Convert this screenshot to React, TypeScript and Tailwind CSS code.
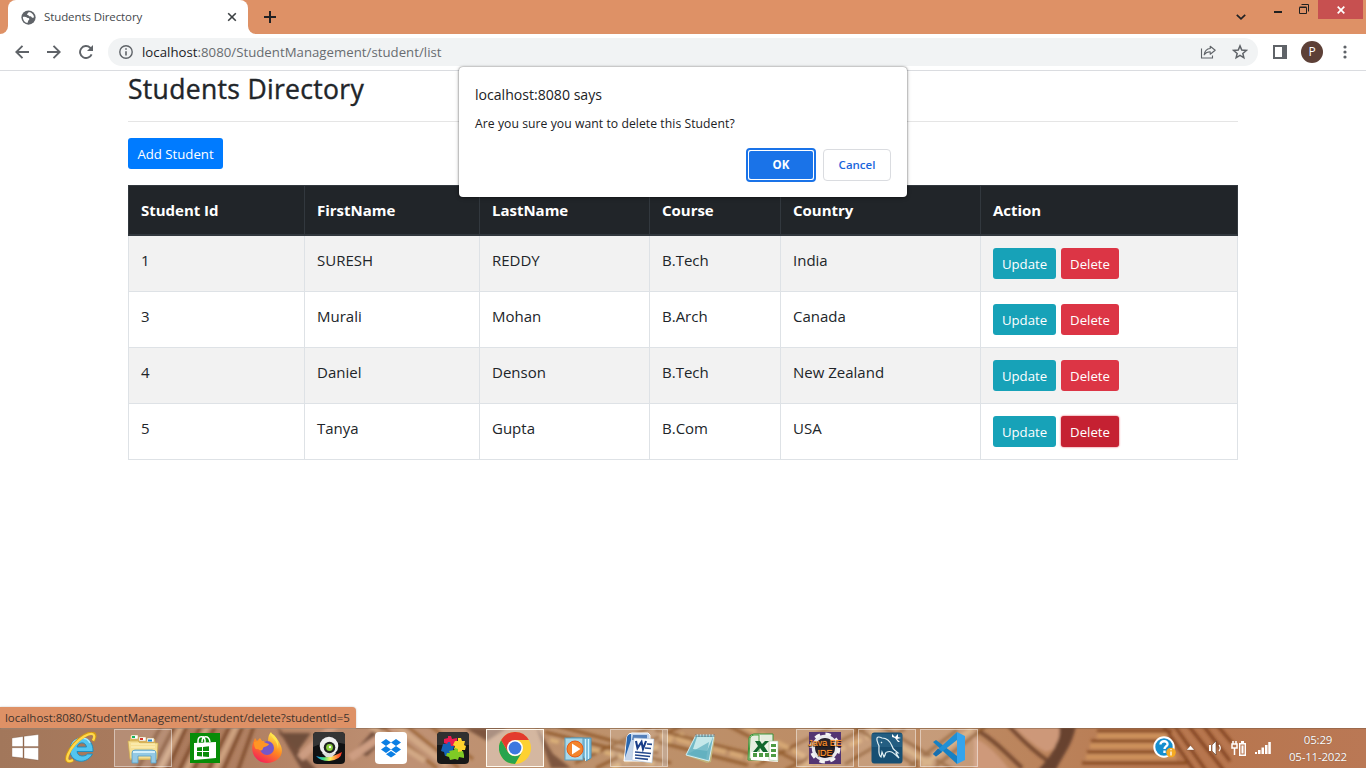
import React from "react";

type IconProps = { children: React.ReactNode; box?: string; cls?: string };

function Svg({ children, box = "0 0 32 32", cls = "w-8 h-8" }: IconProps) {
  return (
    <svg viewBox={box} className={`${cls} shrink-0 block`} fill="none">
      {children}
    </svg>
  );
}

const students = [
  { id: "1", first: "SURESH", last: "REDDY", course: "B.Tech", country: "India" },
  { id: "3", first: "Murali", last: "Mohan", course: "B.Arch", country: "Canada" },
  { id: "4", first: "Daniel", last: "Denson", course: "B.Tech", country: "New Zealand" },
  { id: "5", first: "Tanya", last: "Gupta", course: "B.Com", country: "USA" },
];

const columns = ["Student Id", "FirstName", "LastName", "Course", "Country", "Action"];

function TabStrip() {
  return (
    <header className="flex h-[34px] bg-[#de9166]">
      <div className="flex w-2 items-end bg-white">
        <div className="h-full w-2 rounded-br-lg bg-[#de9166]" />
      </div>
      <div className="bg-[#de9166]">
        <div className="flex h-[34px] w-60 items-center rounded-t-lg bg-white pl-[13px] pr-[10px]">
          <Svg box="0 0 16 16" cls="w-[15px] h-[15px]">
            <circle cx="8" cy="8" r="7.6" fill="#5f6368" />
            <path d="M8.2 2c-.2 1.400-1.600 1.200-1.800 2.500-.1 1 1.500.8 2 1.700.5 1 2.500.4 3 1.400.4 1 1.600.6 2.500.5C14 5 11.400 2.300 8.200 2zM2 7.400c1.500-.3 3.400-.3 4.300.6.8.8 2.300.3 2.600 1.500.2 1-1.200 1.100-1.300 2.200 0 .8-.7 1.200-.6 2.200C4.200 13.500 2 10.900 2 7.400z" fill="#fff" />
          </Svg>
          <span className="ml-2 whitespace-nowrap text-[11.5px] tracking-[-0.1px] text-[#45494d]">Students Directory</span>
          <Svg box="0 0 10 10" cls="ml-auto w-[10px] h-[10px] mr-[1px]">
            <path d="M1.200 1.200l7.600 7.600M8.800 1.200l-7.600 7.600" stroke="#3c4043" strokeWidth="1.600" />
          </Svg>
        </div>
      </div>
      <div className="w-2 bg-white">
        <div className="h-full w-2 rounded-bl-lg bg-[#de9166]" />
      </div>
      <Svg box="0 0 12 12" cls="w-3 h-3 mt-[11px] ml-2">
        <path d="M6 0v12M0 6h12" stroke="#202124" strokeWidth="2" />
      </Svg>
      <div className="ml-auto flex">
        <Svg box="0 0 10 6" cls="w-[10px] h-[6px] mt-[14px] mr-[28px]">
          <path d="M.8 .8L5 4.800 9.200.8" stroke="#202124" strokeWidth="1.700" />
        </Svg>
        <div className="mr-[17px] mt-[11px] h-[2px] w-2 bg-[#202020]" />
        <Svg box="0 0 10 10" cls="w-[10px] h-[10px] mt-[4px] mr-[9px]">
          <path d="M.5 3.500h7v6h-7zM.5 3h7M2.500 .5h7v7" stroke="#202020" />
        </Svg>
        <div className="mr-[3px] flex h-[19px] w-[45px] items-center justify-center bg-[#c75050]">
          <Svg box="0 0 8 8" cls="w-2 h-2">
            <path d="M.7 .7l6.600 6.600M7.300 .7L.7 7.300" stroke="#fff" strokeWidth="1.700" />
          </Svg>
        </div>
      </div>
    </header>
  );
}

function Toolbar() {
  return (
    <div className="flex h-[37px] items-center border-b border-[#dadce0] bg-white pl-[15px]">
      <Svg box="0 0 14 14" cls="w-[14px] h-[14px]">
        <path d="M14 7H1.500M7.500 .8L1.300 7l6.200 6.200" stroke="#5f6368" strokeWidth="1.900" />
      </Svg>
      <Svg box="0 0 14 14" cls="w-[14px] h-[14px] ml-[18px]">
        <path d="M0 7h12.500M6.500 .8L12.700 7l-6.200 6.200" stroke="#5f6368" strokeWidth="1.900" />
      </Svg>
      <Svg box="0 0 14 14" cls="w-[14px] h-[14px] ml-[18px]">
        <path d="M12.600 9.300A6 6 0 1 1 11.200 2.700l1.500 1.500" stroke="#5f6368" strokeWidth="1.900" />
        <path d="M14 0v6H8z" fill="#5f6368" />
      </Svg>
      <div className="ml-[15px] flex h-7 w-[1150px] items-center rounded-full bg-[#f1f3f4] pl-[11px] pr-[10px]">
        <Svg box="0 0 14 14" cls="w-[14px] h-[14px]">
          <circle cx="7" cy="7" r="6.200" stroke="#5f6368" strokeWidth="1.400" />
          <path d="M7 6.200v4.300M7 3.300v1.500" stroke="#5f6368" strokeWidth="1.600" />
        </Svg>
        <span className="ml-[9px] whitespace-nowrap pt-[2px] text-[13.2px] tracking-[0.03px] text-[#686c70]">
          <span className="text-[#202124]">localhost</span>:8080/StudentManagement/student/list
        </span>
        <Svg box="0 0 16 16" cls="w-4 h-4 ml-auto">
          <path d="M1.500 4.500v9.500h11v-2.500" stroke="#5f6368" strokeWidth="1.100" />
          <path d="M10.200 2.200l5 4-5 4V7.800c-3 0-4.600 1-6 3C4.600 7.400 6.200 4.800 10.200 4.500z" stroke="#5f6368" strokeWidth="1.100" strokeLinejoin="round" />
        </Svg>
        <Svg box="0 0 16 16" cls="w-4 h-4 ml-4">
          <path d="M8 1.900l1.750 4.150 4.500.4-3.400 2.950 1 4.400L8 11.450 4.150 13.800l1-4.400-3.400-2.950 4.500-.4z" stroke="#5f6368" strokeWidth="1.500" />
        </Svg>
      </div>
      <Svg box="0 0 14 14" cls="w-[14px] h-[14px] ml-[15px]">
        <path d="M1 1h12v12H1z" stroke="#5f6368" strokeWidth="2" />
        <path d="M9 1h4v12H9z" fill="#5f6368" />
      </Svg>
      <div className="ml-[14px] flex h-[22px] w-[22px] items-center justify-center rounded-full bg-[#5d4037] text-[12px] leading-none text-white">P</div>
      <Svg box="0 0 4 14" cls="w-1 h-[14px] ml-[20px]">
        <g fill="#5f6368"><circle cx="2" cy="2" r="1.600" /><circle cx="2" cy="7" r="1.600" /><circle cx="2" cy="12" r="1.600" /></g>
      </Svg>
    </div>
  );
}

const grid = "grid grid-cols-[176px_175px_170px_131px_200px_258px] ";
const btn = "flex h-[31px] items-center justify-center rounded-[3px] text-[13.200px] text-white pt-[2px] ";

function StudentTable() {
  return (
    <div className="mt-4 w-[1110px] text-[15px] text-[#212529]" role="table">
      <div className={grid + "h-[51px] border-y border-b-2 border-r border-[#32383e] bg-[#212529] font-bold text-white"}>
        {columns.map((c) => (
          <div key={c} className="border-l border-[#32383e] pl-3 pt-[12px] text-[15px] leading-6 tracking-[-0.02px]">{c}</div>
        ))}
      </div>
      {students.map((s, i) => (
        <div key={s.id} className={grid + "h-14 border-b border-r border-[#dee2e6] " + (i % 2 === 0 ? "bg-[#f2f2f2]" : "bg-white")}>
          {[s.id, s.first, s.last, s.course, s.country].map((v, j) => (
            <div key={j} className="border-l border-[#dee2e6] pl-3 pt-[12px] leading-6">{v}</div>
          ))}
          <div className="flex gap-[5px] border-l border-[#dee2e6] pl-3 pt-3">
            <button className={btn + "w-[63px] bg-[#17a2b8]"}>Update</button>
            <button className={btn + "w-[58px] " + (s.id === "5" ? "bg-[#c52132] shadow-[0_0_2px_#dc3545]" : "bg-[#dc3545]")}>Delete</button>
          </div>
        </div>
      ))}
    </div>
  );
}

function ConfirmDialog() {
  return (
    <div role="dialog" className="absolute left-[459px] top-[67px] flex h-[130px] w-[448px] flex-col rounded-[4px] bg-white px-4 pt-[17px] shadow-[0_0_2px_rgba(0,0,0,0.6),0_1px_4px_rgba(0,0,0,0.25)]">
      <h2 className="text-[14.100px] leading-[22px] text-[#202124]">localhost:8080 says</h2>
      <p className="mt-[9px] text-[12.200px] leading-[18px] tracking-[0.05px] text-[#202124]">Are you sure you want to delete this Student?</p>
      <div className="mt-4 flex justify-end gap-2 text-[11.500px] font-semibold">
        <button className="-mt-px -mr-px h-[34px] w-[70px] rounded-[4px] border-2 border-[#1a73e8] bg-white p-px">
          <span className="flex h-full items-center justify-center rounded-[2px] bg-[#1a73e8] font-bold text-white">OK</span>
        </button>
        <button className="h-8 w-[68px] rounded-[4px] border border-[#dadce0] text-[#1a66dc]">Cancel</button>
      </div>
    </div>
  );
}

function Wallpaper() {
  return (
    <svg className="absolute inset-0 h-10 w-full" viewBox="0 0 1366 40" preserveAspectRatio="none">
      <defs>
        <filter id="soft" x="-5%" y="-50%" width="110%" height="200%"><feGaussianBlur stdDeviation="1.500" /></filter>
        <linearGradient id="sand" x1="0" x2="1">
          <stop offset="0" stopColor="#a2775b" /><stop offset=".15" stopColor="#ad7c5e" /><stop offset=".3" stopColor="#bf9174" />
          <stop offset=".45" stopColor="#bd916b" /><stop offset=".7" stopColor="#bd8a62" /><stop offset=".88" stopColor="#b7764e" /><stop offset="1" stopColor="#ba7855" />
        </linearGradient>
      </defs>
      <path d="M0 0h1366v40H0z" fill="url(#sand)" />
      <g filter="url(#soft)" fill="none" opacity=".82">
        <path d="M135 45l28-50M150 45l26-50M166 45l22-50M178 45l24-50M192 45l25-50M207 45l24-50M222 45l22-50M237 45l18-50" stroke="#794625" strokeWidth="3.500" />
        <path d="M158 45l25-50M185 45l24-50M214 45l24-50" stroke="#d5ab87" strokeWidth="5" />
        <path d="M278 5l33 0-13 18z" fill="#614232" />
        <path d="M275-4l30 34 14 14h-16zM354 24l24-27 18 3-29 28z" fill="#654331" />
        <path d="M300 30L337-5M350 30l45-31" stroke="#d2a287" strokeWidth="8" />
        <path d="M380-3l57 43M407-2l52 42M428-4l45 35" stroke="#98612d" strokeWidth="3" />
        <path d="M370-2l55 35M395-3l52 40" stroke="#d6ad89" strokeWidth="6" />
        <path d="M465 0h42l-20 13zM535-4l18 30 18 14h-20z" fill="#6f4a35" />
        <path d="M545 4l126 31M558-2l100 27M575 35l80-38M596 40l85-42" stroke="#8b5323" strokeWidth="3" />
        <path d="M550 12l110 25M612 40l74-35" stroke="#e2b87b" strokeWidth="4" strokeDasharray="9 5" />
        <path d="M655 2l100 25M658 14l90 23M725-4l83 43M756 37l75-38M785 42l80-42" stroke="#8d5627" strokeWidth="3" />
        <path d="M660 7l100 26M744-2l76 38M800 40l74-34" stroke="#dcae78" strokeWidth="5" strokeDasharray="14 4" />
        <path d="M850-4l68 43M878-4l77 47M845 36l60-35M910 38l47-36M936 38l50-40" stroke="#865124" strokeWidth="3" />
        <path d="M870 0l62 37M922 38l50-37" stroke="#d7ad7c" strokeWidth="5" />
        <path d="M980 4c14 8 24 19 42 36M1008-3c10 10 22 24 40 36" stroke="#693d27" strokeWidth="4" />
        <path d="M974 10c12 4 25 18 36 32h-36z" fill="#d29d80" />
        <path d="M1012-3h48c4 10-1 24-14 27-10-4-23-17-34-27z" fill="#d29d80" />
        <path d="M1059-3h17c-3 20-14 31-20 45h-18c8-9 15-17 18-26 4-6 4-13 3-19z" fill="#573526" />
        <path d="M1097 3h75M1091 13h80M1087 24h86M1082 35h105" stroke="#7d3f19" strokeWidth="3" />
        <path d="M1097 8h70M1090 18h82M1086 29h90" stroke="#d3975d" strokeWidth="5" />
        <path d="M1163-3l32 47M1174-3l33 47M1188-3l37 47M1203-3l27 36M1217-3l15 18" stroke="#763817" strokeWidth="3" />
      </g>
      <path d="M0 .5h1366" stroke="#715442" strokeOpacity=".4" />
    </svg>
  );
}

const FolderIcon = (
  <Svg>
    <path d="M3 9V4h8l2 3h15l2 21H3z" fill="#dfb95f" />
    <path d="M4 3h7v4H4zM12 5h7v4h-7zM20 6h7v4h-7z" fill="#fff" stroke="#b99859" strokeWidth=".5" />
    <path d="M5 4h3v2H5z" fill="#14b45b" /><path d="M13 6h3v2h-3z" fill="#d43a2d" /><path d="M21 7.500h4v2h-4z" fill="#1889d5" />
    <path d="M1 9h10l2 2h18l-1 16H3z" fill="#f6df93" stroke="#cda94b" strokeWidth=".7" />
    <path d="M4 12h24M4 15h24" stroke="#fff3c0" />
    <path d="M5 31V21q0-3 3-3h17q4 0 4 3v10h-5v-7H11v7z" fill="#93c9e4" stroke="#559fc5" strokeWidth=".8" />
    <path d="M6 20h22" stroke="#d4f0fa" strokeWidth="2" />
  </Svg>
);

const IeIcon = (
  <Svg>
    <path d="M28 19.500H12c.5 5.500 8 5.500 10.500 2.500h5C20 35 3 29 5 16 7 2 29 2 28 19.500zM12 15h9.500c-1-6-8.500-5-9.500 0z" fill="#53c5ef" stroke="#168cc2" strokeWidth=".9" />
    <path d="M7 13c3-8 15-9 18-2" stroke="#a8eaff" strokeWidth="1.500" />
    <path d="M8 28C-5 35 4 13 19 4c10-6 13-2 9 5" stroke="#d59a15" strokeWidth="3.400" />
    <path d="M8 28C-4 34 4 14 19 4.500c9-5 12-2 9 4" stroke="#ffd94b" strokeWidth="2.300" />
  </Svg>
);

const StoreIcon = (
  <Svg>
    <path d="M1 1h30v30H1z" fill="#088c08" />
    <path d="M5 11l22-1 0 16-22 2z" fill="#fff" />
    <path d="M9 12V9c0-5 6-6 7-1v3M13 10c0-7 7-7 8 0" stroke="#fff" strokeWidth="1.500" />
    <path d="M8 15.500l5-.5v4H8zM14 14.900l6-.6V19h-6zM8 20h5v4.500l-5-.5zM14 20h6v5l-6-.5z" fill="#088c08" />
  </Svg>
);

const FirefoxIcon = (
  <Svg>
    <defs><linearGradient id="fox" x1="25" y1="4" x2="10" y2="30" gradientUnits="userSpaceOnUse"><stop stopColor="#ffe24b" /><stop offset=".45" stopColor="#ff8a20" /><stop offset="1" stopColor="#f52555" /></linearGradient></defs>
    <path d="M20 0c1 3 7 6 9 12 6 11-3 19-13 19C4 31-1 19 2 11l2-5 2 3 3-3 2 3 6 0c0-4 1-7 3-9z" fill="url(#fox)" />
    <circle cx="16" cy="16" r="7" fill="#7657c9" />
    <path d="M3 10c5-2 9-1 12 1l3 1c-1 3-5 2-6 4 0 3-3 3-5 1-3 1-4-2-4-7z" fill="#ff9525" />
    <path d="M19 1c1 5 8 7 8 16 1-6-1-11-4-14z" fill="#ffe54c" />
  </Svg>
);

const CameraIcon = (
  <Svg>
    <defs>
      <linearGradient id="rain" x1="0" x2="1"><stop stopColor="#168ef5" /><stop offset=".3" stopColor="#45df82" /><stop offset=".55" stopColor="#fff15b" /><stop offset="1" stopColor="#ff2922" /></linearGradient>
    </defs>
    <rect width="32" height="32" rx="4" fill="#101112" />
    <path d="M0 4q0-4 4-4h24q4 0 4 4v8Q15 8 0 15z" fill="#353535" />
    <path d="M3 24q12 4 26-4-1 8-13 9-9 0-13-5z" fill="url(#rain)" />
    <circle cx="16" cy="14" r="9.300" fill="#f0f0f0" /><path d="M9 21h14l-4 4h-6z" fill="#ddd" />
    <circle cx="16.500" cy="15.500" r="5.800" fill="#202520" /><circle cx="16.500" cy="15.500" r="3.400" fill="#8bd13e" /><circle cx="17" cy="15" r="1.200" fill="#fff" />
  </Svg>
);

const DropboxIcon = (
  <Svg>
    <rect width="32" height="32" rx="4" fill="#fff" />
    <path d="M11 7l5 3.500-5 3.500-5-3.500zM21 7l5 3.500-5 3.500-5-3.500zM11 14l5 3.500-5 3.500-5-3.500zM21 14l5 3.500-5 3.500-5-3.500zM16 19l5 3.300-5 3.300-5-3.300z" fill="#0b7fe4" />
  </Svg>
);

const PuzzleIcon = (
  <Svg>
    <rect width="32" height="32" rx="4" fill="#171717" /><path d="M0 4q0-4 4-4h24q4 0 4 4v9H0z" fill="#303030" />
    <path d="M7 7l4-1 0-2h3l1 3 5-1 0 5 2 1-1 3-5-1-5 2-1-4-3-1z" fill="#ed1b50" />
    <path d="M18 9l3 0 0-3h3l1 3 3 0-1 4 2 1-1 4-3 0 0 3-4-1-1-3-3 0 1-3-2-1z" fill="#ffd22d" />
    <path d="M6 12l4 0 1-2h2l1 4 3 0-1 5-3 1 0 4-5 0-1-4-3-1z" fill="#1662b7" />
    <path d="M12 19l5-1 1-2 3 1 0 3 5-1 1 4 0 3-5-1-1 3-3-1-5 1-1-3-3-1 1-3 3 0z" fill="#7fca25" />
  </Svg>
);

const ChromeIcon = (
  <Svg>
    <circle cx="16" cy="16" r="16" fill="#fdd131" />
    <path d="M2.140 8A16 16 0 0 0 16 32l7-12A8 8 0 0 1 9 20z" fill="#28a44d" />
    <path d="M16 8h13.860A16 16 0 0 0 2.140 8L9 20z" fill="#e33b2e" />
    <circle cx="16" cy="16" r="8" fill="#fff" /><circle cx="16" cy="16" r="6.400" fill="#3c78df" />
  </Svg>
);

const MediaIcon = (
  <Svg>
    <path d="M10 6h20v20l-5 3z" fill="#80bfdd" stroke="#4e94b7" />
    <path d="M27.500 7v20M24.500 7v22" stroke="#d2f4ff" />
    <rect x="4" y="6" width="18" height="22" fill="#a7d9eb" stroke="#5c9cba" />
    <circle cx="14" cy="17" r="8" fill="#f3842c" stroke="#e65c19" /><path d="M11 11.500l8.500 5.500-8.500 5.500z" fill="#fff" />
  </Svg>
);

const WordIcon = (
  <Svg cls="w-8 h-8 -ml-px">
    <path d="M4 5q1-4 5-4h16l2 2v24l-4 2H1z" fill="#c4d5eb" stroke="#fff" />
    <path d="M4 5q1-3 4-3v6l-6 18z" fill="#2866af" /><path d="M10 3h14v5H9z" fill="#547fb9" />
    <path d="M11 6l20 1-2 24-20-3z" fill="#fff" stroke="#afc2da" strokeWidth=".6" />
    <path d="M13 9l1.500 7 4-6 1.500 7 3-8" stroke="#183c87" strokeWidth="2.100" />
    <path d="M24 12l5 .3M22 16l6 .5M12 20l16 1.500M12 23l15 1.500M12 26l13 1.300" stroke="#24498d" strokeWidth="1.700" />
  </Svg>
);

const NotepadIcon = (
  <Svg>
    <path d="M11 3h18l1 2-4 25-4 1L2 24z" fill="#c1b37a" />
    <path d="M11 3h18l-5 26L1 23z" fill="#72b9c6" stroke="#d1edf2" />
    <path d="M12 5h16l-6 14-14-2z" fill="#c5e8ea" /><path d="M24 10l-3 17-18-5z" fill="#5daebd" fillOpacity=".7" />
    <path d="M11 2v3M14 2v3M17 2v3M20 2v3M23 2v3M26 2v3M29 2v3" stroke="#777" />
  </Svg>
);

const ExcelIcon = (
  <Svg>
    <path d="M2 6q1-4 5-4h19v26H1z" fill="#eef3e9" stroke="#379238" />
    <path d="M3 6q1-3 4-3h5v24H2z" fill="#e5eee0" stroke="#4aa241" /><path d="M14 3h11v8H14z" fill="#e5eee0" />
    <path d="M4 20h27v10L4 28z" fill="#fff" /><path d="M22 9h9v20l-9-1z" fill="#fff" stroke="#a8c69b" strokeWidth=".6" />
    <path d="M6 21h4v4H6zM12 21h4v4h-4zM18 21h4v4h-4zM24 12h5v3h-5zM24 17h5v3h-5zM24 22h5v3h-5z" fill="#4e9b45" />
    <path d="M8 9h5l2 3 3-3h4l-5 5 4 6h-5l-3-4-3 4H6l5-6z" fill="#11672d" />
  </Svg>
);

const EclipseIcon = (
  <div className="relative h-8 w-8">
    <Svg>
      <path d="M0 0h32v32H0z" fill="#533572" />
      <circle cx="16" cy="16" r="11.500" stroke="#e9e9ed" strokeWidth="3.500" />
      <circle cx="16" cy="16" r="14" stroke="#f4f4f4" strokeWidth="3" strokeDasharray="5.500 5.500" />
      <circle cx="16" cy="16" r="10" fill="#252128" />
    </Svg>
    <div className="absolute -left-1 top-[7px] flex w-10 flex-col items-center whitespace-nowrap font-['Liberation_Sans',sans-serif] text-[9px] leading-[10px] text-[#ff9432] [text-shadow:0_1px_1px_#000,0_0_1px_#ff8a20]">
      <span className="block h-[9px] leading-[9px]">Java EE</span>
      <span className="block h-[9px] leading-[10px]">IDE</span>
    </div>
  </div>
);

const MysqlIcon = (
  <Svg>
    <rect x=".5" y=".5" width="31" height="31" rx="3" fill="#174f73" /><path d="M1 2h30v13H1z" fill="#326d91" fillOpacity=".5" />
    <path d="M6 6c-1 3 1 5 2 8 0 4-1 9 2 11l1-5 2 5c2-3 1-5 3-5 5-2 7 2 12 6l-3-5 2 0c-4-4-5-3-6-7-2-5-6-8-10-8-2-1-4-2-5 0zM10 10l1 1" stroke="#e3f2f6" strokeWidth="1.200" />
    <path d="M21 2l3 3 3-3 0 3 3 1-4 1 3 3-2 0-3-4-3-1z" fill="#fff" />
  </Svg>
);

const VscodeIcon = (
  <Svg>
    <path d="M0 10l3-2L24 24v8z" fill="#1681c4" />
    <path d="M0 22l3 2.500L24 8V0z" fill="#2190d6" />
    <path d="M0 22l3 2.500 6-4.500-4-3.500z" fill="#176fae" />
    <path d="M24 0l8 4v24l-8 4z" fill="#34a4ed" />
  </Svg>
);

const dock: { icon: React.ReactNode; state?: string; name: string }[] = [
  { name: "ie", icon: IeIcon },
  { name: "explorer", icon: FolderIcon, state: "open" },
  { name: "store", icon: StoreIcon },
  { name: "firefox", icon: FirefoxIcon },
  { name: "camera", icon: CameraIcon },
  { name: "dropbox", icon: DropboxIcon },
  { name: "puzzle", icon: PuzzleIcon },
  { name: "chrome", icon: ChromeIcon, state: "active" },
  { name: "media", icon: MediaIcon },
  { name: "word", icon: WordIcon, state: "stack" },
  { name: "notepad", icon: NotepadIcon },
  { name: "excel", icon: ExcelIcon },
  { name: "eclipse", icon: EclipseIcon, state: "open" },
  { name: "mysql", icon: MysqlIcon, state: "open" },
  { name: "vscode", icon: VscodeIcon, state: "open" },
];

function frame(state?: string) {
  if (state === "active") return "border border-[#fffaf0] bg-white/35";
  if (state === "stack") return "border border-white/45 bg-white/15 shadow-[inset_-4px_0_0_rgba(150,110,80,0.35),inset_-5px_0_0_rgba(255,255,255,0.4)]";
  if (state === "open") return "border border-white/45 bg-white/15";
  return "";
}

function Taskbar() {
  return (
    <footer className="relative mt-auto h-10 w-full">
      <Wallpaper />
      <div className="relative flex h-10 items-center">
        <div className="flex w-[50px] pl-3">
          <Svg box="0 0 27 27" cls="w-[27px] h-[27px] -mt-px">
            <path d="M0 4l11-1.500V12.600H0zM12 2.300L26.500 .5V12.600H12zM0 13.700h11v10.300L0 22.800zM12 13.700h14.500v12.600L12 24.300z" fill="#fff" stroke="#664331" strokeWidth=".3" />
          </Svg>
        </div>
        {dock.map((d) => (
          <div key={d.name} className="flex h-10 w-[62px] justify-center pt-px">
            <div className={"flex h-[38px] w-[58px] items-center justify-center " + frame(d.state)}>{d.icon}</div>
          </div>
        ))}
        <Svg box="0 0 24 24" cls="w-6 h-6 ml-[173px]">
          <circle cx="11" cy="11" r="9.700" fill="#158fce" stroke="#fff" strokeWidth="2" />
          <path d="M7.500 8.500c0-4.500 7.500-4 7 0-.5 2-3 2-3 4.500M11.500 14.500v2.500" stroke="#fff" strokeWidth="2.400" />
          <circle cx="18" cy="16.500" r="4.800" fill="#f5aa22" /><path d="M18 15.500v4M18 13v1.200" stroke="#fff" strokeWidth="1.300" />
        </Svg>
        <Svg box="0 0 9 6" cls="w-[9px] h-[6px] ml-[9px]"><path d="M4.500 .5L8.400 5H.6z" fill="#fff" stroke="#5e4030" strokeWidth=".3" /></Svg>
        <Svg box="0 0 14 16" cls="w-[14px] h-4 ml-[13px]">
          <path d="M1.500 4.500v6.500M4 5l4-4v14l-4-4z" fill="#fff" stroke="#5d3d2b" strokeWidth=".6" /><path d="M1 5h2v6H1z" fill="#fff" /><path d="M11 5q2.500 3 0 6" stroke="#fff" strokeWidth="1.200" />
        </Svg>
        <Svg box="0 0 16 18" cls="w-4 h-[18px] ml-[9px]">
          <path d="M1 5h5v4H1zM2 2v3M5 2v3M3.500 9v7" stroke="#fff" strokeWidth="1.500" />
          <path d="M8.700 4.700h5.600v11.600H8.700z" stroke="#fff" strokeWidth="1.400" /><path d="M10 2h3v2h-3zM10.500 6.500h2v8h-2z" fill="#fff" />
        </Svg>
        <Svg box="0 0 16 12" cls="w-4 h-3 ml-2">
          <path d="M0 10h2v2H0zM3 8h2.500v4H3zM6.500 5.500h2.500v6.500H6.500zM10 3h2.500v9H10zM13.300 0h2.500v12h-2.500z" fill="#fff" />
        </Svg>
        <div className="ml-auto mr-[18px] w-[60px] whitespace-nowrap text-center text-[11.500px] leading-[17px] tracking-[-0.200px] text-white [text-shadow:0_0_1px_#704b37]">
          <div>05:29</div>
          <div>05-11-2022</div>
        </div>
      </div>
    </footer>
  );
}

export default function App() {
  return (
    <div className="relative flex h-[768px] w-[1366px] flex-col overflow-hidden bg-white font-['Open_Sans','Noto_Sans',sans-serif]">
      <TabStrip />
      <Toolbar />
      <main className="px-32">
        <h1 className="h-[50px] pt-[1px] text-[26.500px] font-medium leading-[34px] tracking-[0.32px] text-[#212529] [-webkit-text-stroke:0.4px_#212529]">Students Directory</h1>
        <hr className="border-[#e5e5e5]" />
        <button className={btn + "mt-4 w-[95px] bg-[#007bff]"}>Add Student</button>
        <StudentTable />
      </main>
      <ConfirmDialog />
      <Taskbar />
      <div className="absolute left-0 top-[707px] h-[21px] w-[356px] whitespace-nowrap rounded-tr-[4px] bg-[#de9166] pl-[5px] text-[11.500px] leading-[21px] tracking-[-0.05px] text-[#3e332d] shadow-[0_0_2px_#bbb]">
        localhost:8080/StudentManagement/student/delete?studentId=5
      </div>
    </div>
  );
}
